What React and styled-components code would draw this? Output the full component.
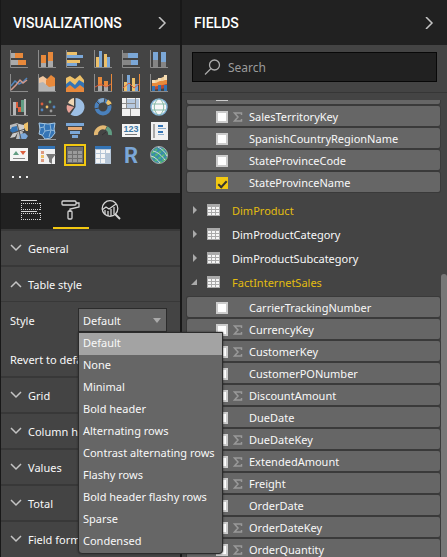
import React from "react";
import styled, { createGlobalStyle } from "styled-components";

const GlobalStyle = createGlobalStyle`
  *, *::before, *::after { box-sizing: border-box; }
  body { margin: 0; background: #444; }
  body, button, input, select {
    font-family: "Noto Sans", "Open Sans", sans-serif;
    font-size: 11px;
    color: #f8f8f8;
  }
  button { background: none; border: 0; padding: 0; cursor: pointer; }
  svg { display: block; flex: none; }
`;

const Page = styled.main`
  display: grid;
  grid-template-columns: minmax(182px, 2fr) minmax(0, 3fr);
  height: 100vh;
  overflow: hidden;
  background: #444;
  @media (max-width: 460px) { grid-template-columns: 182px minmax(0, 1fr); }
`;

const Pane = styled.section`
  display: flex;
  flex-direction: column;
  min-width: 0;
  min-height: 0;
  border-right: ${(p) => (p.$divided ? "2px solid #181818" : "0")};
  border-left: ${(p) => (p.$divided ? "1px solid #181818" : "0")};
`;

const PaneHeader = styled.header`
  display: flex;
  align-items: center;
  justify-content: space-between;
  flex: none;
  height: 45px;
  padding: 0 12px;
  background: #212121;
`;

const PaneTitle = styled.h2`
  margin: 0;
  font: 500 14px/20px Roboto, sans-serif;
  color: #fff;
`;

const Gallery = styled.div`
  display: grid;
  grid-template-columns: repeat(6, 22px);
  gap: 2px 6px;
  flex: none;
  padding: 3px 7px 0;
`;

const VisualButton = styled.button`
  display: grid;
  place-items: center;
  width: 22px;
  height: 22px;
  border: 2px solid ${(p) => (p.$selected ? "#f2c811" : "transparent")};
`;

const MoreButton = styled.button`
  display: flex;
  align-items: center;
  gap: 5px;
  flex: none;
  height: 22px;
  margin: 0 0 5px 11px;
`;

const Dot = styled.span`
  width: 2px;
  height: 2px;
  background: #eee;
`;

const TabBar = styled.div`
  display: flex;
  gap: 4px;
  flex: none;
  height: 36px;
  padding-left: 12px;
  background: #212121;
`;

const Tab = styled.button`
  display: grid;
  place-items: center;
  width: 36px;
  border-bottom: 2px solid ${(p) => (p.$active ? "#f2c811" : "transparent")};
`;

const SectionButton = styled.button`
  display: flex;
  align-items: center;
  gap: 6px;
  flex: none;
  height: 36px;
  padding-left: 9px;
  border-top: 2px solid #383838;
  text-align: left;
`;

const SectionBody = styled.div`
  flex: none;
  height: 75px;
  padding: 5px 13px 0 9px;
  border-top: 1px solid #383838;
`;

const StyleRow = styled.div`
  display: grid;
  grid-template-columns: 68px minmax(0, 1fr);
  align-items: center;
  height: 26px;
`;

const Picker = styled.div`
  position: relative;
  display: grid;
  align-items: center;
`;

const StyleSelect = styled.select`
  grid-area: 1 / 1;
  appearance: none;
  width: 100%;
  height: 24px;
  padding: 0 4px;
  border: 1px solid #2b2b2b;
  border-radius: 0;
  background: #666;
`;

const Caret = styled.svg`
  grid-area: 1 / 1;
  justify-self: end;
  margin-right: 6px;
  pointer-events: none;
`;

const Menu = styled.ul`
  position: absolute;
  z-index: 2;
  top: 100%;
  left: 0;
  min-width: 145px;
  margin: 0;
  padding: 0;
  list-style: none;
  white-space: nowrap;
  background: #666;
  border: 1px solid #2b2b2b;
  border-radius: 0 0 4px 4px;
  box-shadow: 0 0 2px #222;
`;

const MenuItem = styled.li`
  height: 22px;
  padding: 0 4px;
  line-height: 20px;
  background: ${(p) => (p.$selected ? "#a3a3a3" : "transparent")};
`;

const RevertButton = styled.button`
  display: block;
  height: 24px;
  margin-top: 14px;
  white-space: nowrap;
`;

const SearchArea = styled.div`
  flex: none;
  padding: 7px 10px 10px;
  border-bottom: 1px solid #363636;
`;

const SearchBox = styled.label`
  display: flex;
  align-items: center;
  gap: 7px;
  height: 30px;
  padding: 0 11px;
  border: 1px solid #080808;
  background: #212121;
`;

const SearchInput = styled.input`
  flex: 1;
  min-width: 0;
  padding: 0;
  border: 0;
  outline: 0;
  background: none;
  font-size: 12px;
  &::placeholder { color: #9b9b9b; opacity: 1; }
`;

const ListViewport = styled.div`
  display: grid;
  grid-template-columns: minmax(0, 1fr) 6px;
  flex: 1;
  min-height: 0;
  margin-top: 7px;
  overflow: hidden;
`;

const Tree = styled.div`
  min-height: 0;
  margin-top: -16px;
  padding: 0 1px 0 5px;
`;

const ScrollTrack = styled.div`
  padding-top: 174px;
`;

const ScrollThumb = styled.div`
  height: 100%;
  border-radius: 3px 3px 0 0;
  background: #777;
`;

const FieldGroup = styled.div`
  display: grid;
  gap: 2px;
  padding: ${(p) => (p.$nested ? "3px 0" : "0 0 6px")};
`;

const FieldRow = styled.label`
  display: grid;
  grid-template-columns: 12px 10px 1fr;
  column-gap: 5px;
  align-items: center;
  height: 20px;
  padding: 2px 0 0 29px;
  border-radius: 2px;
  background: #666;
  box-shadow: 0 0 0 1px #3a3a3a;
`;

const Check = styled.input`
  appearance: none;
  display: grid;
  place-items: center;
  width: 12px;
  height: 12px;
  margin: 0;
  border: 2px solid #ccc;
  background: #fff;
  &:checked { border-color: #f2c811; background: #f2c811; }
  &:checked::before {
    content: "";
    width: 9px;
    height: 5px;
    border: solid #333;
    border-width: 0 0 2px 2px;
    transform: rotate(-47deg);
  }
`;

const FieldName = styled.span`
  grid-column: 3;
  padding-left: 1px;
  line-height: 18px;
`;

const TableRow = styled.button`
  display: flex;
  align-items: center;
  width: 100%;
  height: 24px;
  padding-left: 3px;
  gap: 9px;
  color: ${(p) => (p.$used ? "#e3bd10" : "#f8f8f8")};
`;

const TableName = styled.span`
  padding-left: 3px;
`;

const axis = <path d="M.5 0v17.5H18" stroke="#8c8c8c" fill="none" />;
const O = "#e8893b", B = "#7ba7d7", Y = "#edc069", D = "#3474b5", R = "#dc5f3e", G = "#aaa", T = "#619d83";

const visuals = [
  ["Stacked bar chart", <>{axis}<path fill={G} d="M1 3h4v5H1zM1 10h7v5H1z" /><path fill={O} d="M5 3h8v5H5zM8 10h8v5H8z" /></>],
  ["Stacked column chart", <>{axis}<path fill={O} d="M3 5h5v8H3zM10 2h5v9h-5z" /><path fill={G} d="M3 13h5v4H3zM10 11h5v6h-5z" /></>],
  ["Clustered bar chart", <>{axis}<path fill={Y} d="M1 2h10v3H1zM1 10h13v3H1z" /><path fill={B} d="M1 5h16v3H1zM1 13h10v3H1z" /></>],
  ["Clustered column chart", <>{axis}<path fill={Y} d="M2 7h3v10H2zM10 4h3v13h-3z" /><path fill={B} d="M5 1h3v16H5zM13 7h3v10h-3z" /></>],
  ["100% stacked bar chart", <>{axis}<path fill="#858585" d="M1 3h5v5H1zM1 10h8v5H1z" /><path fill={B} d="M6 3h10v5H6zM9 10h7v5H9z" /></>],
  ["100% stacked column chart", <>{axis}<path fill={B} d="M3 2h5v8H3zM11 2h5v10h-5z" /><path fill="#858585" d="M3 10h5v7H3zM11 12h5v5h-5z" /></>],

  ["Line chart", <>{axis}<path d="m1 12 4-5 4 3 4-2 4-4" stroke="#5285bd" strokeWidth="1.500" fill="none" /><path d="m1 16 5-5 4-5 3 3 4-3" stroke="#d19a8e" strokeWidth="1.500" fill="none" /></>],
  ["Area chart", <><path fill="#f1c7a0" d="m1 4 4-2 4 3 3 5-3 4H1z" /><path fill={O} d="m8 6 5-5 4 3v12H8z" /><path fill="#b5b5b5" d="m1 9 4-1 6 5 6-1v5H1z" />{axis}</>],
  ["Stacked area chart", <><path fill={Y} d="m0 4 4-2 5 3 5-4 4 5v6H0z" /><path fill={D} d="m0 10 4-3 5 4 4-5 5 3v6H0z" /><path fill={O} d="m0 14 4-3 5 4 5-4 4 3v4H0z" /></>],
  ["Line and stacked column chart", <>{axis}<path fill={O} d="M4 3h4v9H4zM10 7h4v6h-4z" /><path fill={G} d="M4 12h4v5H4zM10 12h4v5h-4z" /><path d="m1 13 6-3 5 3 5-3" stroke={R} fill="none" /><path d="M17.5 0v17" stroke={O} /></>],
  ["Line and clustered column chart", <>{axis}<path fill={Y} d="M2 8h3v9H2zM10 4h3v13h-3z" /><path fill={B} d="M5 1h3v16H5zM13 10h3v7h-3z" /><path d="m1 14 6-5 5 5 5-4" stroke={R} fill="none" /><path d="M17.5 0v17" stroke={O} /></>],
  ["Ribbon chart", <><path fill="#f1ce99" d="m2 7 7-2 8-4v9H2z" /><path fill={O} d="M2 9h4l4-2h3l4-2v5l-4 2-7 1H2z" /><path fill="#ba4a34" d="m2 13 6-1 9-2v4l-15 2z" /><path fill={D} d="M2 12h3v5H2zM8 11h3v6H8zM14 11h3v6h-3z" /><path fill="#f4dcb4" d="M2 6h3v3H2zM8 4h3v3H8zM14 1h3v5h-3z" />{axis}</>],

  ["Waterfall chart", <>{axis}<path fill="#b7b7b7" d="M3 4h3v13H3zM14 1h2v16h-2z" /><path fill={R} d="M6 4h2v6H6zM8 9h3v5H8z" /><path fill={T} d="M11 2h3v12h-3z" /></>],
  ["Scatter chart", <>{axis}<circle cx="4" cy="6" r="1.4" fill={R} /><circle cx="12" cy="4" r="1.4" fill={T} /><circle cx="4" cy="12" r="1.4" fill="#5285bd" /><circle cx="9" cy="9" r="1.4" fill={Y} /><circle cx="16" cy="9" r="1.4" fill="#5285bd" /><circle cx="13" cy="13" r="1.4" fill="#999" /></>],
  ["Pie chart", <><path fill="#9dbfe4" d="M9.5 9V0a9 9 0 1 1-5 16.5z" /><path fill="#efd5b3" d="M8 8 2 5a8 8 0 0 1 6-5z" /><path fill="#e8a399" d="m8 9-5 6A8 8 0 0 1 1 7z" /></>],
  ["Donut chart", <><circle cx="9" cy="9" r="6.500" fill="none" stroke="#4a81bd" strokeWidth="4" /><path d="M5 3.3a7 7 0 0 1 6-1" fill="none" stroke="#83a7cc" strokeWidth="4" /><path d="M13 3.3A7 7 0 0 1 16 7" fill="none" stroke={Y} strokeWidth="4" /><path d="m2 3 4 4M11 0l-1 5M18 6l-5 2M0 11l5-1" stroke="#444" /></>],
  ["Treemap", <><path fill="#f0f0f0" d="M0 0h18v18H0z" /><path fill="#b5c8df" d="M5 1h8v4H5zM5 6h8v4H5zM14 1h3v9h-3z" /><path d="M4.5 0v11M13.5 0v11M4 5.5h9M0 10.5h18M8.5 11v7M0 5.5h4" stroke="#8b8b8b" /></>],
  ["Map", <><circle cx="9" cy="9" r="8" fill="#f8f8f8" stroke="#84b7da" strokeWidth="1.500" /><path d="M2 6h14M2 12h14M8 1c-5 5-5 11 0 16M10 1c5 5 5 11 0 16" fill="none" stroke="#86baa6" /></>],

  ["Filled map", <><path fill="#bbb" d="M0 3 7 1l4 2-1 5-6 1-4-2zM8 9l5 1-2 7H6z" /><path fill={D} d="m2 5 5-1 1 5-5 2-3-2z" /><path fill={Y} d="m14 2 4-2v9h-2l-2-3z" /><path fill="#ccc" d="m9 2 5 1v6l-4 1z" /><path fill={B} d="m10 12 5-1 3 3-2 3H9z" /><path fill="#ccc" d="m3 11 5-1-3 5-5 1z" /><path d="m7 2 2 7-6 2m6-2 6-2M9 9l2 8" stroke="#555" fill="none" /></>],
  ["Shape map", <><path fill={D} stroke="#a6c9e6" d="m1 1 9 1 7-1-1 6 1 4-4 5-6 1-3-4-3-1 1-5z" /><path d="m1 6 5-1 1 4 6-1 4 1M6 5l1-4M7 9l-3 5M12 2l1 6-2 7" stroke="#91b9da" fill="none" /><path d="M0 17.500h18" stroke="#999" /></>],
  ["Funnel", <><path fill={B} d="M0 1h18v3H0zM4 9h10v3H4zM6 13h6v3H6z" /><path fill="#e6a972" d="M2 5h14v3H2z" /></>],
  ["Gauge", <><path d="M2 13a7 7 0 0 1 10-7" fill="none" stroke="#e3b873" strokeWidth="4" /><path d="M12.500 6a7 7 0 0 1 3.500 7" fill="none" stroke={T} strokeWidth="4" /><path d="m8 13 4-3" stroke="#333" /></>],
  ["Card", <><path fill="#f4f4f4" d="M0 2h18v13H0z" /><text x="9" y="10" textAnchor="middle" fontFamily="Liberation Sans, sans-serif" fontWeight="700" fontSize="9" fill="#3d78a6">123</text><path d="M3 12.500h12" stroke="#777" /></>],
  ["Multi-row card", <><path fill="#f1f1f1" d="M1 0h17v18H1z" /><path d="M4 2v14" stroke="#aaa" strokeWidth="2" /><path fill={D} d="M8 3h5v2H8zM8 9h5v2H8z" /><path d="M8 6.500h8M8 12.500h6" stroke="#8cabc9" /></>],

  ["KPI", <><path fill="#f4f4f4" d="M0 2h18v13H0z" /><path fill={T} d="m3 9 3-4 3 4z" /><path fill={R} d="M10 5h6l-3 4z" /><path d="M3 12.500h12" stroke="#888" /></>],
  ["Slicer", <><path fill="#f1f1f1" d="M0 0h17v18H0z" /><path fill={D} d="M0 0h17v3H0z" /><path fill="#dc9980" d="M3 5h3v3H3zM3 13h3v3H3z" /><path fill={Y} d="M3 9h3v3H3z" /><path fill="#797979" d="M8 8h10l-4 5v5l-3-2v-3z" /></>],
  ["Table", <><path fill="#6f6f6f" d="M1 1h16v16H1z" /><path fill="#9b9b9b" d="M2 5h4v3H2zM7 5h4v3H7zM12 5h4v3h-4zM2 9h4v3H2zM7 9h4v3H7zM12 9h4v3h-4zM2 13h4v3H2zM7 13h4v3H7zM12 13h4v3h-4z" /></>],
  ["Matrix", <><path fill="#b5c5d6" d="M1 0h16v18H1z" /><path fill={D} d="M1 0h16v3H1z" /><path fill="#f5f5f5" d="M2 4h4v3H2zM7 4h4v3H7zM12 4h4v3h-4zM2 8h4v4H2zM7 8h4v4H7zM2 13h4v4H2zM7 13h4v4H7z" /></>],
  ["R script visual", <text x="9" y="17" textAnchor="middle" fontFamily="Roboto, sans-serif" fontWeight="700" fontSize="22" fill={B}>R</text>],
  ["ArcGIS map", <><circle cx="9" cy="9" r="8.500" fill="#398da8" stroke="#aaa" /><path d="m2 7 5-4M2 12 14 3M5 15 17 7M9 17l8-5" stroke="#58b86f" strokeWidth="2" strokeDasharray="3 1" /><path d="M3 5c5 1 9 5 12 9M8 1c5 3 7 5 9 9M1 10c4 1 7 4 9 7" stroke="#d1dadc" fill="none" /></>],
];

const sections = ["Grid", "Column headers", "Values", "Total", "Field formatting"];
const tableStyles = [
  "Default", "None", "Minimal", "Bold header", "Alternating rows",
  "Contrast alternating rows", "Flashy rows", "Bold header flashy rows", "Sparse", "Condensed",
];

const geographyFields = [
  { name: "SalesTerritoryKey", sum: true },
  { name: "SpanishCountryRegionName" },
  { name: "StateProvinceCode" },
  { name: "StateProvinceName", checked: true },
];
const salesFields = [
  { name: "CarrierTrackingNumber" },
  { name: "CurrencyKey", sum: true },
  { name: "CustomerKey", sum: true },
  { name: "CustomerPONumber" },
  { name: "DiscountAmount", sum: true },
  { name: "DueDate" },
  { name: "DueDateKey", sum: true },
  { name: "ExtendedAmount", sum: true },
  { name: "Freight", sum: true },
  { name: "OrderDate" },
  { name: "OrderDateKey", sum: true },
  { name: "OrderQuantity", sum: true },
];

const Chevron = ({ d = "m1 3 5 5 5-5", color = "#c4c4c4" }) => (
  <svg width="12" height="12" viewBox="0 0 12 12" fill="none" stroke={color} strokeWidth="1.500"><path d={d} /></svg>
);

const Header = ({ title }) => (
  <PaneHeader>
    <PaneTitle>{title}</PaneTitle>
    <button aria-label={`Collapse ${title.toLowerCase()}`}><Chevron d="m3 0 6 6-6 6" /></button>
  </PaneHeader>
);

const Section = ({ name, open }) => (
  <SectionButton aria-expanded={!!open}>
    <Chevron d={open ? "m1 9 5-5 5 5" : undefined} />
    {name}
  </SectionButton>
);

const Field = ({ name, sum, checked, hideName }) => (
  <FieldRow>
    <Check type="checkbox" defaultChecked={checked} aria-label={name} />
    {sum && (
      <svg width="10" height="10" viewBox="0 0 10 10" fill="none" stroke="#999" strokeWidth="1.500">
        <path d="M8.500 3V1H1.500L5 5 1.500 9h7V7" />
      </svg>
    )}
    {!hideName && <FieldName>{name}</FieldName>}
  </FieldRow>
);

const TableNode = ({ name, used, open }) => (
  <TableRow $used={used} aria-expanded={!!open}>
    <svg width="8" height="10" viewBox="0 0 8 10" fill="#aaa">
      <path d={open ? "M7 2v6H1z" : "m3 1 4 4-4 4z"} />
    </svg>
    <svg width="13" height="12" viewBox="0 0 13 12">
      <path fill="#aaa" d="M0 0h13v12H0z" />
      <path fill="#f5f5f5" d="M1 3h3v2H1zM5 3h3v2H5zM9 3h3v2H9zM1 6h3v2H1zM5 6h3v2H5zM9 6h3v2H9zM1 9h3v2H1zM5 9h3v2H5zM9 9h3v2H9z" />
    </svg>
    <TableName>{name}</TableName>
  </TableRow>
);

export default function App() {
  return (
    <>
      <GlobalStyle />
      <Page>
        <Pane $divided>
          <Header title="VISUALIZATIONS" />
          <Gallery>
            {visuals.map(([name, art]) => (
              <VisualButton key={name} aria-label={name} $selected={name === "Table"}>
                <svg width="18" height="18" viewBox="0 0 18 18" overflow="visible">{art}</svg>
              </VisualButton>
            ))}
          </Gallery>
          <MoreButton aria-label="More visuals"><Dot /><Dot /><Dot /></MoreButton>
          <TabBar>
            <Tab aria-label="Fields">
              <svg width="20" height="20" viewBox="0 0 20 20" fill="none" stroke="#d5d5d5">
                <path d="M0 .5h16M0 11.500h16" />
                <path strokeDasharray="1 1" d="M0 3.500h20M0 9.500h20M0 13.500h20M0 19.500h20M.5 3v7M19.500 3v7M.5 13v7M19.500 13v7" />
              </svg>
            </Tab>
            <Tab aria-label="Format" $active>
              <svg width="20" height="20" viewBox="0 0 20 20" fill="none" stroke="#d5d5d5" strokeWidth="1.300">
                <rect x="1" y="1" width="14" height="4" rx="1" />
                <path d="M15 3h3v4L9 9v3" />
                <rect x="7" y="11" width="4" height="8" rx="1" />
              </svg>
            </Tab>
            <Tab aria-label="Analytics">
              <svg width="22" height="20" viewBox="0 0 22 20" fill="none" stroke="#d5d5d5" strokeWidth="1.300">
                <circle cx="10" cy="8.500" r="7.800" />
                <path d="m2 10 4-3 3 2 7-5M5 10v4M8 11v5M11 9v7M14 7v7" />
                <path strokeWidth="2" d="m15 14 5 5" />
              </svg>
            </Tab>
          </TabBar>
          <Section name="General" />
          <Section name="Table style" open />
          <SectionBody>
            <StyleRow>
              <label htmlFor="table-style">Style</label>
              <Picker>
                <StyleSelect id="table-style" defaultValue="Default">
                  {tableStyles.map((s) => <option key={s}>{s}</option>)}
                </StyleSelect>
                <Caret width="8" height="5" viewBox="0 0 8 5" fill="#aaa"><path d="M0 0h8L4 5z" /></Caret>
                <Menu role="listbox" aria-label="Style">
                  {tableStyles.map((s) => (
                    <MenuItem key={s} role="option" aria-selected={s === "Default"} $selected={s === "Default"}>{s}</MenuItem>
                  ))}
                </Menu>
              </Picker>
            </StyleRow>
            <RevertButton>Revert to default</RevertButton>
          </SectionBody>
          {sections.map((s) => <Section key={s} name={s} />)}
        </Pane>

        <Pane>
          <Header title="FIELDS" />
          <SearchArea>
            <SearchBox>
              <svg width="17" height="16" viewBox="0 0 17 16" fill="none" stroke="#aaa" strokeWidth="1.300">
                <circle cx="10.500" cy="6" r="5" />
                <path d="m7 9.500-6 6" />
              </svg>
              <SearchInput type="search" placeholder="Search" aria-label="Search fields" />
            </SearchBox>
          </SearchArea>
          <ListViewport>
            <Tree>
              <FieldGroup>
                <Field name="SalesTerritoryGroup" hideName />
                {geographyFields.map((f) => <Field key={f.name} {...f} />)}
              </FieldGroup>
              <TableNode name="DimProduct" used />
              <TableNode name="DimProductCategory" />
              <TableNode name="DimProductSubcategory" />
              <TableNode name="FactInternetSales" used open />
              <FieldGroup $nested>
                {salesFields.map((f) => <Field key={f.name} {...f} />)}
              </FieldGroup>
            </Tree>
            <ScrollTrack><ScrollThumb /></ScrollTrack>
          </ListViewport>
        </Pane>
      </Page>
    </>
  );
}
